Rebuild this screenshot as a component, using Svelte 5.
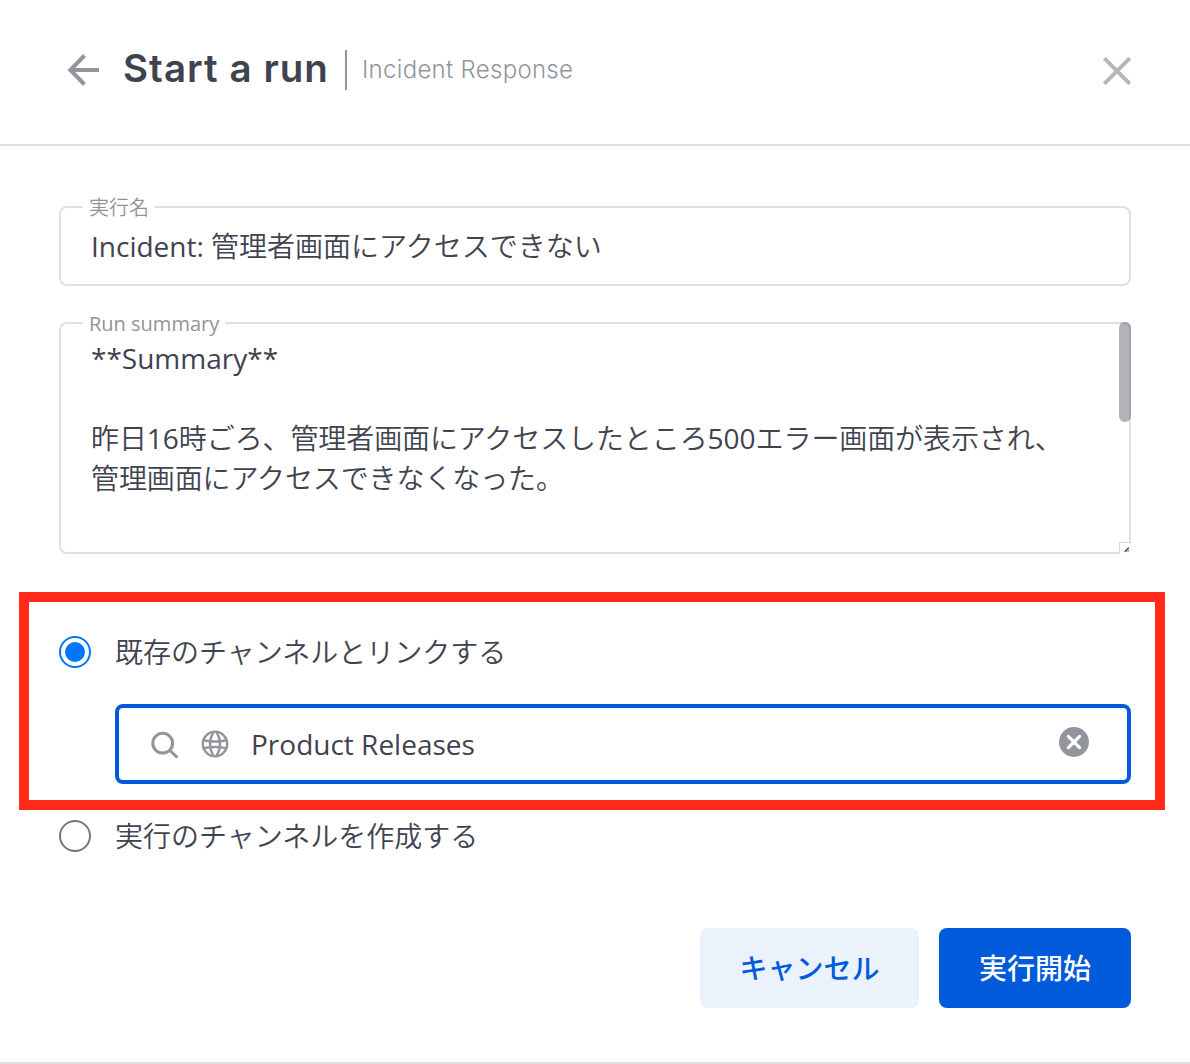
<script>
  let runName = 'Incident: 管理者画面にアクセスできない';
  let summary = [
    '**Summary**',
    '',
    '昨日16時ごろ、管理者画面にアクセスしたところ500エラー画面が表示され、',
    '管理画面にアクセスできなくなった。'
  ];
  let channel = 'Product Releases';

  // Splits mixed text into Latin and Japanese runs so each gets its own weight.
  function runs(text) {
    return (text.match(/[\x20-\x7e]+|[^\x20-\x7e]+/g) ?? []).map((t) => ({
      text: t,
      jp: t.charCodeAt(0) > 0x7e
    }));
  }
</script>

{#snippet mixed(text)}{#each runs(text) as run}<span class:jp={run.jp} class="run">{run.text}</span>{/each}{/snippet}

<main class="modal">
  <header>
    <svg class="back" viewBox="0 0 34 34" width="34" height="34">
      <path d="M18.5 2.5 L4.3 17 L18.5 31.5 M4 17 H33" />
    </svg>
    <h1>Start a run</h1>
    <div class="divider"></div>
    <span class="subtitle">Incident Response</span>
    <svg class="close" viewBox="0 0 28 28" width="28" height="28">
      <path d="M1.3 1.3 L26.7 26.7 M26.7 1.3 L1.3 26.7" />
    </svg>
  </header>

  <section class="body">
    <div class="field name">
      <span class="legend jp">実行名</span>
      <div class="value">{@render mixed(runName)}</div>
    </div>

    <div class="field summary">
      <span class="legend">Run summary</span>
      {#each summary as line}
        <div class="line">{@render mixed(line)}</div>
      {/each}
      <div class="thumb"></div>
      <div class="grip">
        <svg viewBox="0 0 11 10" width="11" height="10">
          <path class="dark" d="M4.8 8.8 L8.8 4.8" />
          <path class="pale" d="M7.4 9 L9.2 7.2" />
        </svg>
      </div>
    </div>

    <div class="highlight">
      <div class="option">
        <span class="radio checked"></span>
        <span class="jp">既存のチャンネルとリンクする</span>
      </div>
      <div class="picker">
        <svg class="search" viewBox="0 0 28 28" width="28" height="28">
          <circle cx="12.7" cy="12.2" r="9.9" />
          <path d="M20 19.5 L26.4 25.6" />
        </svg>
        <svg class="globe" viewBox="0 0 28 28" width="28" height="28">
          <circle cx="14" cy="14" r="12.2" />
          <path d="M12.4 2 Q5.6 14 12.4 26 M15.6 2 Q22.4 14 15.6 26 M2.4 10.2 Q14 12.8 25.6 10.2 M2.4 18.4 Q14 15.6 25.6 18.4" />
        </svg>
        <span class="channel">{channel}</span>
        <svg class="clear" viewBox="0 0 30 30" width="30" height="30">
          <circle cx="15" cy="15" r="15" />
          <path d="M9.4 9.4 L20.6 20.6 M20.6 9.4 L9.4 20.6" />
        </svg>
      </div>
    </div>

    <div class="option second">
      <span class="radio"></span>
      <span class="jp">実行のチャンネルを作成する</span>
    </div>
  </section>

  <footer>
    <button class="cancel">キャンセル</button>
    <button class="start">実行開始</button>
  </footer>
</main>

<style>
  :global(body) {
    background: #fff;
  }
  .modal {
    box-sizing: border-box;
    width: 1190px;
    height: 1064px;
    display: flex;
    flex-direction: column;
    border-bottom: 2px solid #e0e0e0;
    font-family: 'Open Sans', 'Noto Sans CJK JP', sans-serif;
    font-size: 28px;
    line-height: 40px;
    color: #3f4350;
    overflow: hidden;
  }
  svg {
    fill: none;
    flex: none;
  }
  .jp {
    font-weight: 350;
  }
  .line .jp {
    letter-spacing: -0.1px;
  }
  header {
    box-sizing: border-box;
    height: 146px;
    flex: none;
    display: flex;
    align-items: flex-start;
    padding: 50px 59px 0 66px;
    border-bottom: 2px solid #e0e0e0;
  }
  .back {
    margin-top: 3px;
    stroke: #92959d;
    stroke-width: 4;
  }
  h1 {
    margin: -2px 0 0 23px;
    width: 222px;
    font-family: Inter, sans-serif;
    font-size: 38.5px;
    line-height: 40px;
    font-weight: 600;
    letter-spacing: 1.05px;
    white-space: nowrap;
  }
  .divider {
    width: 2px;
    height: 40px;
    background: #90939c;
  }
  .subtitle {
    margin-left: 15px;
    font-family: Inter, sans-serif;
    font-size: 24px;
    font-weight: 300;
    letter-spacing: 0.3px;
    color: #92959d;
    white-space: nowrap;
  }
  .close {
    margin: 7px 0 0 auto;
    stroke: #b4b6bc;
    stroke-width: 4;
  }
  .body {
    padding: 60px 59px 0;
  }
  .field {
    box-sizing: border-box;
    position: relative;
    border: 2px solid #e0e0e0;
    border-radius: 8px;
    padding-left: 30px;
    white-space: nowrap;
  }
  .run {
    white-space: pre;
  }
  .name {
    height: 80px;
    padding-top: 18px;
  }
  .summary {
    height: 232px;
    margin-top: 36px;
    padding-top: 14px;
  }
  .line {
    height: 40px;
  }
  .legend {
    position: absolute;
    left: 22px;
    top: -15px;
    padding: 0 6px;
    background: #fff;
    font-size: 20px;
    line-height: 30px;
    color: #90939c;
  }
  .thumb {
    position: absolute;
    right: -2px;
    top: -2px;
    width: 12px;
    height: 100px;
    border-radius: 6px;
    background: #b2b3b8;
    box-shadow: inset -2px 2px 0 #a2a4aa;
  }
  .grip {
    position: absolute;
    right: -2px;
    bottom: -2px;
    width: 11px;
    height: 11px;
    border-top: 1px solid #d8d8d8;
    border-left: 1px solid #d8d8d8;
    background: #fff;
  }
  .grip svg {
    display: block;
  }
  .dark {
    stroke: #444;
    stroke-width: 1.6;
  }
  .pale {
    stroke: #999;
    stroke-width: 1.2;
  }
  .highlight {
    box-sizing: border-box;
    width: 1146px;
    height: 218px;
    margin: 38px 0 0 -40px;
    border: 10px solid #ff2a17;
    padding: 30px 24px 0 30px;
  }
  .option {
    display: flex;
    align-items: center;
    gap: 24px;
    height: 40px;
    white-space: nowrap;
  }
  .second {
    margin-top: 6px;
  }
  .radio {
    box-sizing: border-box;
    width: 32px;
    height: 32px;
    border: 2px solid #767676;
    border-radius: 50%;
  }
  .checked {
    border-color: #0075ff;
    padding: 4px;
    background: #0075ff content-box;
  }
  .picker {
    box-sizing: border-box;
    width: 1016px;
    height: 80px;
    margin: 32px 0 0 56px;
    border: 4px solid #005ad9;
    border-radius: 8px;
    display: flex;
    align-items: center;
    padding: 0 38px 0 31px;
  }
  .search,
  .globe {
    stroke: #92959d;
  }
  .search {
    stroke-width: 3;
    stroke-linecap: round;
    margin-top: 2px;
  }
  .globe {
    stroke-width: 2.5;
    margin-left: 23px;
  }
  .channel {
    margin-left: 22px;
    margin-top: -1px;
  }
  .clear {
    margin-left: auto;
    margin-top: -4px;
  }
  .clear circle {
    fill: #92959d;
  }
  .clear path {
    stroke: #fff;
    stroke-width: 3.2;
    stroke-linecap: round;
  }
  footer {
    display: flex;
    justify-content: flex-end;
    gap: 20px;
    margin-top: 72px;
    padding-right: 59px;
  }
  button {
    height: 80px;
    border: 0;
    border-radius: 8px;
    padding: 0 0 2px;
    font: 500 28px/40px 'Noto Sans CJK JP', sans-serif;
  }
  .cancel {
    width: 219px;
    background: #ebf2fc;
    color: #005ad9;
  }
  .start {
    width: 192px;
    background: #005ad9;
    color: #fff;
  }
</style>
